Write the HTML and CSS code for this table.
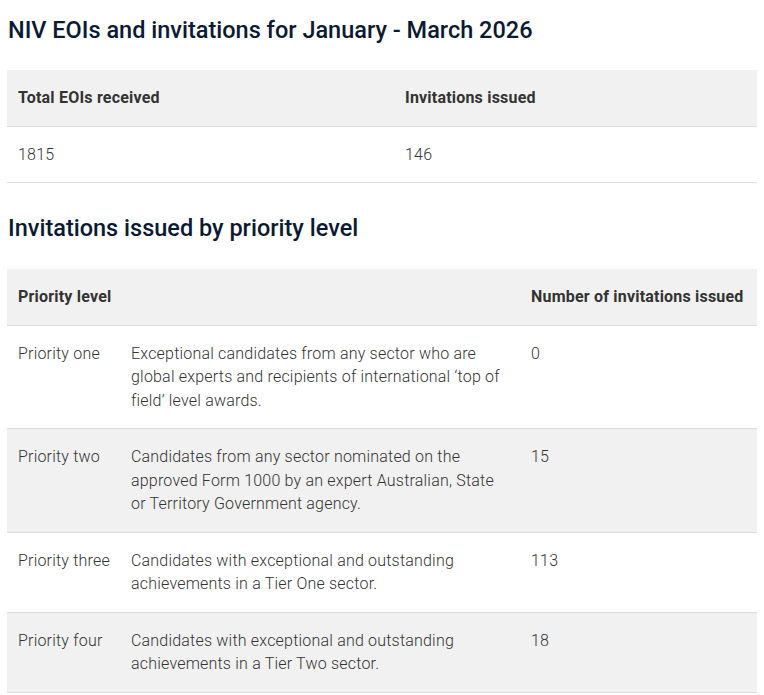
FILE: index.html
```html
<!DOCTYPE html>
<html>
<head>
<meta charset="utf-8">
<link rel="stylesheet" href="styles.css">
</head>
<body>
<main class="page">
  <h2 class="title">NIV EOIs and invitations for January - March 2026</h2>
  <table class="data data-summary">
    <thead>
      <tr><th>Total EOIs received</th><th>Invitations issued</th></tr>
    </thead>
    <tbody>
      <tr><td>1815</td><td>146</td></tr>
    </tbody>
  </table>

  <h2 class="title title-second">Invitations issued by priority level</h2>
  <table class="data data-priority">
    <thead>
      <tr><th class="c1">Priority level</th><th class="c2"></th><th class="c3">Number of invitations issued</th></tr>
    </thead>
    <tbody>
      <tr><td class="lvl">Priority one</td><td>Exceptional candidates from any sector who are global experts and recipients of international ‘top of field’ level awards.</td><td>0</td></tr>
      <tr><td class="lvl">Priority two</td><td>Candidates from any sector nominated on the approved Form 1000 by an expert Australian, State or Territory Government agency.</td><td>15</td></tr>
      <tr><td class="lvl">Priority three</td><td>Candidates with exceptional and outstanding achievements in a Tier One sector.</td><td>113</td></tr>
      <tr><td class="lvl">Priority four</td><td>Candidates with exceptional and outstanding achievements in a Tier Two sector.</td><td>18</td></tr>
    </tbody>
  </table>
</main>
</body>
</html>
```
FILE: styles.css
```css
html, body {
  margin: 0;
  padding: 0;
  background: #ffffff;
}
body {
  font-family: Roboto, "Liberation Sans", sans-serif;
  color: #333333;
}
.page {
  padding: 0 7px;
}
.title {
  font-family: Roboto, sans-serif;
  font-weight: 500;
  font-size: 23.5px;
  line-height: 30px;
  color: #0b1a33;
  margin: 0;
  padding: 15px 0 0 1px;
  height: 55px;
  box-sizing: border-box;
}
.title-second {
  padding-top: 30px;
  height: 86px;
}
.data {
  width: 750px;
  border-collapse: collapse;
  table-layout: fixed;
  font-size: 16px;
  line-height: 23.5px;
  letter-spacing: 0.2px;
}
.data th {
  background: #f1f1f1;
  font-weight: 700;
  font-size: 16px;
  color: #333333;
  text-align: left;
  padding: 16px 11px;
  border-bottom: 1px solid #dcdcdc;
  vertical-align: middle;
  white-space: nowrap;
}
.data td {
  padding: 16px 11px;
  vertical-align: top;
  border-bottom: 1px solid #dcdcdc;
  color: #333333;
  font-weight: 300;
}
.data td.lvl {
  white-space: nowrap;
}
.data-summary {
  margin-top: 15px;
}
.data-summary th:first-child {
  width: 365px;
}
.data-priority tbody tr:nth-child(even) td {
  background: #f1f1f1;
}
.data-priority .c1 { width: 91px; }
.data-priority .c2 { width: 378px; }
```
